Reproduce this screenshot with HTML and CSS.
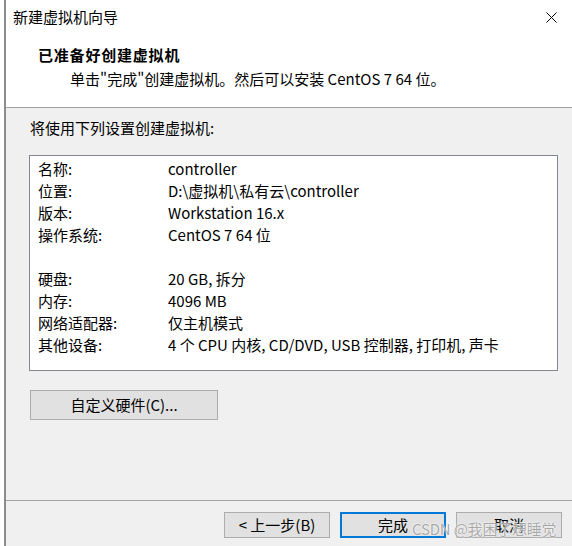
FILE: index.html
```html
<!DOCTYPE html>
<html lang="zh-CN">
<head>
<meta charset="utf-8">
<title>新建虚拟机向导</title>
<link rel="stylesheet" href="styles.css">
</head>
<body>
<div class="window">
  <div class="titlebar">
    <span class="title">新建虚拟机向导</span>
    <svg class="close" width="11" height="11" viewBox="0 0 11 11" aria-hidden="true">
      <path d="M0.5 0.5 L10.5 10.5 M10.5 0.5 L0.5 10.5" stroke="#000" stroke-width="1" fill="none"/>
    </svg>
  </div>
  <div class="header">
    <div class="heading">已准备好创建虚拟机</div>
    <div class="subtitle">单击"完成"创建虚拟机。然后可以安装 CentOS 7 64 位。</div>
  </div>
  <div class="content">
    <div class="intro">将使用下列设置创建虚拟机:</div>
    <div class="listbox">
      <div class="row"><span class="label">名称:</span><span>controller</span></div>
      <div class="row"><span class="label">位置:</span><span>D:\虚拟机\私有云\controller</span></div>
      <div class="row"><span class="label">版本:</span><span>Workstation 16.x</span></div>
      <div class="row"><span class="label">操作系统:</span><span>CentOS 7 64 位</span></div>
      <div class="row"></div>
      <div class="row"><span class="label">硬盘:</span><span>20 GB, 拆分</span></div>
      <div class="row"><span class="label">内存:</span><span>4096 MB</span></div>
      <div class="row"><span class="label">网络适配器:</span><span>仅主机模式</span></div>
      <div class="row"><span class="label">其他设备:</span><span>4 个 CPU 内核, CD/DVD, USB 控制器, 打印机, 声卡</span></div>
    </div>
    <button class="btn custom">自定义硬件(C)...</button>
  </div>
  <div class="footer">
    <button class="btn">&lt; 上一步(B)</button>
    <button class="btn primary">完成</button>
    <button class="btn">取消</button>
  </div>
  <span class="watermark">CSDN @我困了想睡觉</span>
</div>
</body>
</html>
```

FILE: styles.css
```css
html, body {
  margin: 0;
  padding: 0;
}
body {
  background: #ffffff;
  font-family: "Noto Sans CJK SC", "Noto Sans", sans-serif;
  font-size: 15px;
  color: #000;
}
.window {
  position: relative;
  margin-left: 4px;
  border-left: 2px solid #8c8c8c;
  height: 546px;
  box-sizing: border-box;
  display: flex;
  flex-direction: column;
  overflow: hidden;
}
.titlebar {
  height: 34px;
  display: flex;
  align-items: center;
  justify-content: space-between;
  padding: 0 15px 0 7px;
  background: #fff;
}
.title {
  line-height: 20px;
}
.close {
  display: block;
}
.header {
  background: #fff;
  padding: 11px 0 18px 32px;
  border-bottom: 1px solid #a0a0a0;
}
.heading {
  font-weight: bold;
  line-height: 20px;
  letter-spacing: 0.8px;
}
.subtitle {
  margin-top: 4px;
  padding-left: 32px;
  line-height: 20px;
}
.content {
  background: #f0f0f0;
  height: 392px;
  box-sizing: border-box;
  padding: 10px 0 0 23px;
}
.intro {
  padding-left: 1px;
  line-height: 20px;
}
.listbox {
  margin-top: 17px;
  width: 529px;
  height: 216px;
  box-sizing: border-box;
  border: 1px solid #828790;
  background: #fff;
  padding: 2px 0 0 8px;
}
.row {
  display: flex;
  height: 22px;
  line-height: 22px;
  white-space: nowrap;
}
.label {
  width: 130px;
  flex: none;
}
.btn {
  width: 106px;
  height: 26px;
  box-sizing: border-box;
  border: 1px solid #adadad;
  background: #e1e1e1;
  font-family: inherit;
  font-size: 15px;
  color: #000;
  padding: 0;
  line-height: 22px;
  border-radius: 0;
}
.btn.custom {
  display: block;
  margin-top: 19px;
  margin-left: 1px;
  width: 188px;
  height: 30px;
}
.btn.primary {
  border: 2px solid #0078d7;
}
.footer {
  flex: 1;
  background: #f0f0f0;
  border-top: 1px solid #a0a0a0;
  display: flex;
  justify-content: flex-end;
  align-items: flex-start;
  gap: 10px;
  padding: 11px 10px 0 0;
}
.watermark {
  position: absolute;
  left: 406px;
  top: 518px;
  font-size: 15px;
  line-height: 22px;
  letter-spacing: -0.2px;
  color: rgba(140, 140, 140, 0.75);
  text-shadow: 0 0 2px #fff, 0 0 1px #fff;
  white-space: nowrap;
}
```
